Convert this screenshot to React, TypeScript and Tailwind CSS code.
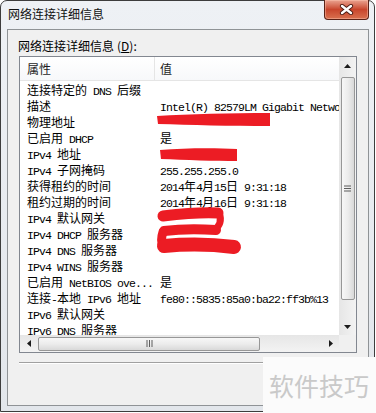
import React from "react";

const rows: [string, string][] = [
  ["连接特定的 DNS 后缀", ""],
  ["描述", "Intel(R) 82579LM Gigabit Network Connection"],
  ["物理地址", ""],
  ["已启用 DHCP", "是"],
  ["IPv4 地址", ""],
  ["IPv4 子网掩码", "255.255.255.0"],
  ["获得租约的时间", "2014年4月15日 9:31:18"],
  ["租约过期的时间", "2014年4月16日 9:31:18"],
  ["IPv4 默认网关", ""],
  ["IPv4 DHCP 服务器", ""],
  ["IPv4 DNS 服务器", ""],
  ["IPv4 WINS 服务器", ""],
  ["已启用 NetBIOS ove...", "是"],
  ["连接-本地 IPv6 地址", "fe80::5835:85a0:ba22:ff3b%13"],
  ["IPv6 默认网关", ""],
  ["IPv6 DNS 服务器", ""],
];

function T({ s }: { s: string }) {
  const parts = s.split(/([\x20-\x7e]+)/).filter((p) => p.length > 0);
  return (
    <>
      {parts.map((p, i) =>
        /^[\x20-\x7e]+$/.test(p) ? (
          <span
            key={i}
            className="font-['Liberation_Mono',monospace] text-[11.5px] tracking-[-0.9px]"
          >
            {p}
          </span>
        ) : (
          <span key={i} className="font-['Noto_Sans_CJK_SC',sans-serif] text-[12px]">
            {p}
          </span>
        )
      )}
    </>
  );
}

function Arrow({ dir }: { dir: "up" | "down" | "left" | "right" }) {
  const pts =
    dir === "up"
      ? "0,4 3.5,0 7,4"
      : dir === "down"
      ? "0,0 3.5,4 7,0"
      : dir === "left"
      ? "4,0 0,3.5 4,7"
      : "0,0 4,3.5 0,7";
  const w = dir === "up" || dir === "down" ? 7 : 4;
  const h = dir === "up" || dir === "down" ? 4 : 7;
  return (
    <svg width={w} height={h} viewBox={`0 0 ${w} ${h}`}>
      <polygon points={pts} fill="#1b1b1b" />
    </svg>
  );
}

export default function App() {
  return (
    <div className="relative w-[376px] h-[413px] overflow-hidden bg-white">
      <div className="w-[375px] h-[412px] border border-[#3d3d3d] rounded-t-[7px] bg-gradient-to-b from-[#eef1f5] to-[#e2e6eb] flex flex-col">
        {/* title bar */}
        <div className="h-[28px] flex items-start justify-between pl-[7px] pr-[5px]">
          <div className="h-[26px] flex items-center font-['Noto_Sans_CJK_SC',sans-serif] text-[12px] text-[#111]">
            网络连接详细信息
          </div>
          <div className="mt-[-1px] w-[45px] h-[20px] rounded-b-[4px] border border-[#5a2217] border-t-0 bg-gradient-to-b from-[#e9a390] via-[#c8452c] to-[#d9704f] flex items-center justify-center shadow-[inset_0_0_0_1px_rgba(255,200,180,0.45)]">
            <svg width="15" height="11" viewBox="0 0 15 11">
              <path d="M3 2 L12 9 M12 2 L3 9" stroke="#4a1a12" strokeWidth="4.2" strokeLinecap="round" />
              <path d="M3 2 L12 9 M12 2 L3 9" stroke="#ffffff" strokeWidth="2.4" strokeLinecap="round" />
            </svg>
          </div>
        </div>

        {/* client area */}
        <div className="ml-[6px] w-[362px] h-[377px] border border-[#8f9396] bg-[#f0f0f0] flex flex-col">
          <div className="pt-[8px] pl-[10px] h-[24px] leading-[16px] font-['Noto_Sans_CJK_SC',sans-serif] text-[12px] text-[#000]">
            网络连接详细信息<span className="ml-[3px]">(<span className="underline">D</span>):</span>
          </div>
          <div className="mt-[2px] ml-[11px] w-[338px] h-[297px] border border-[#828790] bg-white flex">
            <div className="w-[319px] flex flex-col">
              {/* list content */}
              <div className="h-[278px] overflow-hidden">
                <div className="h-[24px] flex border-b border-[#e5e5e5] bg-gradient-to-b from-[#ffffff] to-[#f7f8fa] font-['Noto_Sans_CJK_SC',sans-serif] text-[12px] text-[#1e1e1e]">
                  <div className="w-[135px] pl-[7px] pt-[3px] border-r border-[#e5e5e5]">属性</div>
                  <div className="pl-[5px] pt-[3px]">值</div>
                </div>
                {rows.map(([k, v], i) => (
                  <div key={i} className="h-[16px] leading-[16px] flex whitespace-pre text-black">
                    <div className="w-[135px] shrink-0 pl-[7px] overflow-hidden">
                      <T s={k} />
                    </div>
                    <div className="pl-[5px] shrink-0">
                      <T s={v} />
                    </div>
                  </div>
                ))}
              </div>
              {/* horizontal scrollbar */}
              <div className="h-[17px] flex items-center bg-gradient-to-b from-[#e6e6e6] to-[#f3f3f3]">
                <div className="w-[17px] h-[17px] flex items-center justify-center">
                  <Arrow dir="left" />
                </div>
                <div className="ml-[1px] w-[222px] h-[14px] rounded-[2px] border border-[#979797] bg-gradient-to-b from-[#f7f7f7] via-[#ececec] to-[#d9d9d9] flex items-center justify-center">
                  <svg width="7" height="7" viewBox="0 0 7 7">
                    <path d="M1 0 V7 M3.5 0 V7 M6 0 V7" stroke="#5d5d5d" strokeWidth="1" />
                  </svg>
                </div>
                <div className="flex-1" />
                <div className="w-[17px] h-[17px] flex items-center justify-center">
                  <Arrow dir="right" />
                </div>
              </div>
            </div>
            {/* vertical scrollbar */}
            <div className="w-[17px] flex flex-col">
              <div className="h-[278px] flex flex-col items-center bg-gradient-to-r from-[#e6e6e6] to-[#f3f3f3]">
                <div className="h-[17px] w-[17px] flex items-center justify-center">
                  <Arrow dir="up" />
                </div>
                <div className="mt-[3px] h-[223px] w-[14px] rounded-[2px] border border-[#979797] bg-gradient-to-r from-[#f7f7f7] via-[#ececec] to-[#d9d9d9] flex items-center justify-center">
                  <svg width="7" height="7" viewBox="0 0 7 7">
                    <path d="M0 1 H7 M0 3.5 H7 M0 6 H7" stroke="#5d5d5d" strokeWidth="1" />
                  </svg>
                </div>
                <div className="flex-1" />
                <div className="h-[17px] w-[17px] flex items-center justify-center">
                  <Arrow dir="down" />
                </div>
              </div>
              <div className="h-[17px] bg-[#f0f0f0]" />
            </div>
          </div>
          {/* separator */}
          <div className="mt-[9px] ml-[11px] w-[338px] h-[2px] border-t border-[#a0a0a0] border-b border-b-white" />
        </div>
      </div>

      {/* red redaction scribbles */}
      <svg className="absolute left-0 top-0 pointer-events-none" width="376" height="413" viewBox="0 0 376 413">
        <g fill="#ec1c24">
          <path d="M157 116 C 190 114, 230 113, 270 113 L 270 126 C 230 126, 190 125, 158 124 Z" />
          <path d="M160 150 C 185 148, 215 148, 237 149 L 237 161 C 215 161, 185 160, 161 159 Z" />
        </g>
        <g stroke="#ec1c24" strokeLinecap="round" fill="none">
          <path d="M163 216 C 180 214, 200 212, 218 213" strokeWidth="11" />
          <path d="M219 213 C 222 220, 220 226, 214 230" strokeWidth="7" />
          <path d="M164 231 C 180 229, 200 229, 216 230" strokeWidth="10" />
          <path d="M163 232 C 161 238, 161 242, 163 246" strokeWidth="9" />
          <path d="M164 246 C 185 244, 210 244, 234 247" strokeWidth="14" />
        </g>
      </svg>

      {/* watermark */}
      <div className="absolute left-[263px] top-[357px] w-[113px] h-[56px] bg-[#fbfbfb] flex items-center pl-[6px]">
        <span className="font-['Noto_Sans_CJK_SC',sans-serif] text-[25px] leading-none text-[#c9c9c9]">
          软件技巧
        </span>
      </div>
    </div>
  );
}
